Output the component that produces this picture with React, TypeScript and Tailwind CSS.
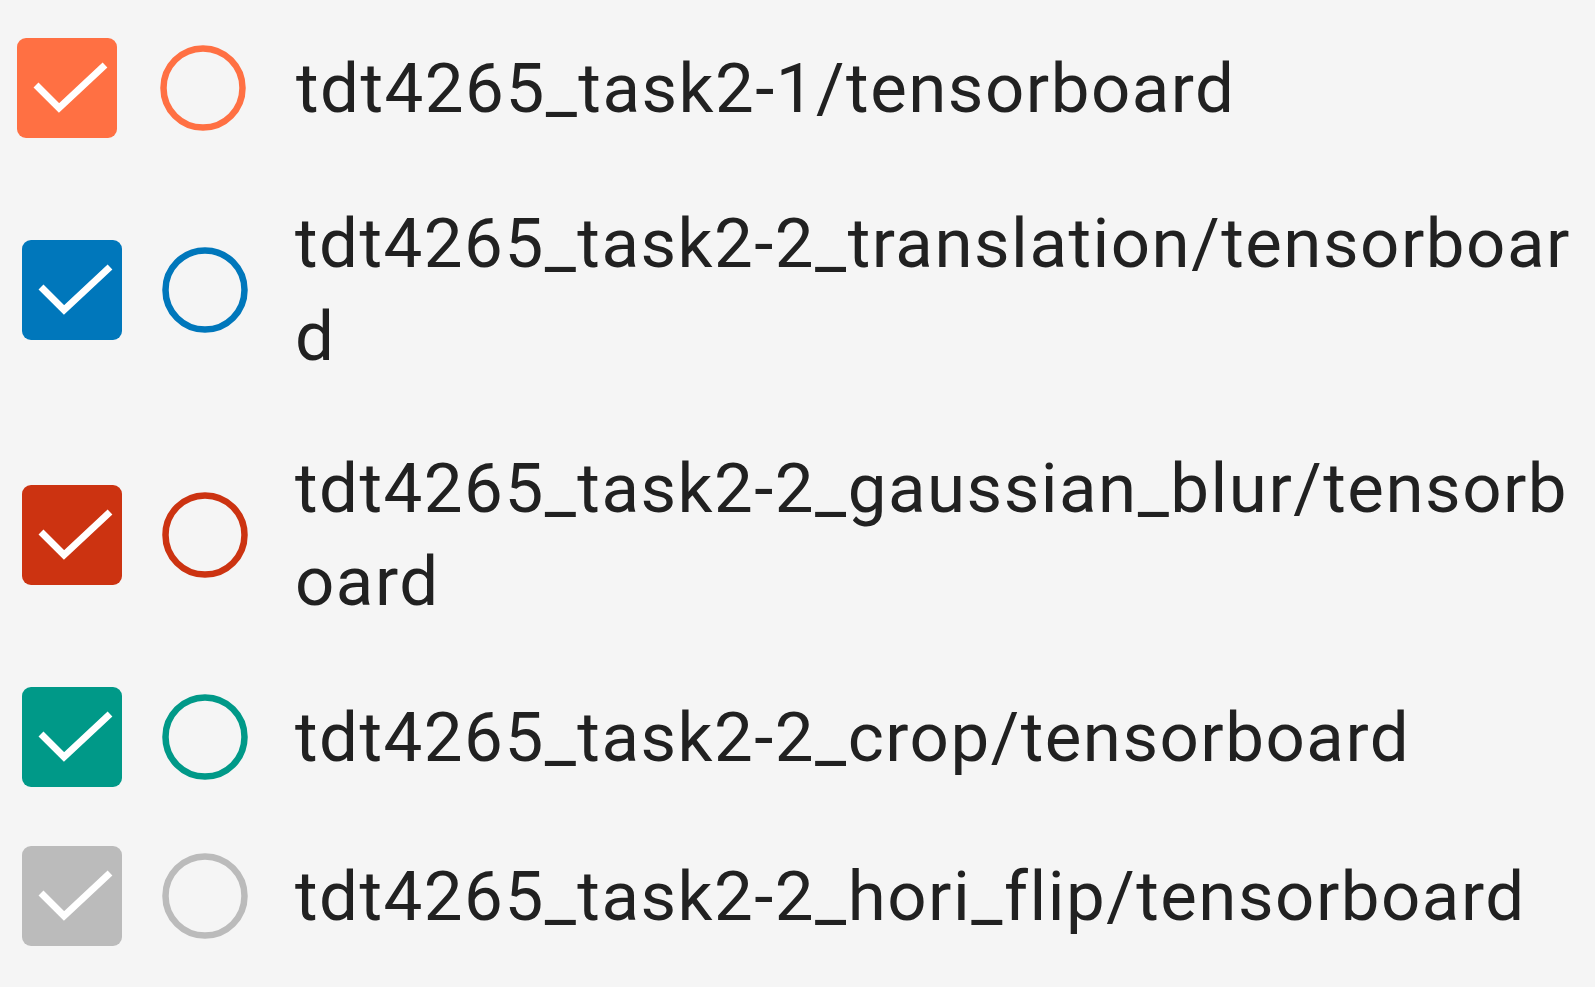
import React from "react"

type Run = {
  name: string
  color: string
  shift?: boolean
}

const runs: Run[] = [
  { name: "tdt4265_task2-1/tensorboard", color: "#ff7043", shift: true },
  { name: "tdt4265_task2-2_translation/tensorboard", color: "#0077bb" },
  { name: "tdt4265_task2-2_gaussian_blur/tensorboard", color: "#cc3311" },
  { name: "tdt4265_task2-2_crop/tensorboard", color: "#009988" },
  { name: "tdt4265_task2-2_hori_flip/tensorboard", color: "#bbbbbb" },
]

function CheckBox({ color }: { color: string }) {
  return (
    <div
      className="w-[100px] h-[100px] rounded-[9px] shrink-0 flex items-center justify-center"
      style={{ backgroundColor: color }}
    >
      <svg width="100" height="100" viewBox="0 0 100 100" fill="none">
        <path
          d="M19 47 L42 70 L88 27"
          stroke="white"
          strokeWidth="7"
          strokeLinecap="butt"
          strokeLinejoin="miter"
        />
      </svg>
    </div>
  )
}

function Radio({ color }: { color: string }) {
  return (
    <svg width="86" height="86" viewBox="0 0 86 86" className="shrink-0">
      <circle cx="43" cy="43" r="39.5" fill="none" stroke={color} strokeWidth="6.5" />
    </svg>
  )
}

export default function App() {
  return (
    <div
      className="w-[1595px] h-[987px] bg-[#f5f5f5] overflow-hidden pt-[8.5px]"
      style={{ fontFamily: "Roboto, 'Liberation Sans', sans-serif" }}
    >
      {runs.map((run) => (
        <div key={run.name} className="flex items-center py-[29.5px] pr-[14px]">
          <div className={run.shift ? "pl-[17px] pr-[43px]" : "pl-[22px] pr-[40px]"}>
            <CheckBox color={run.color} />
          </div>
          <div className={run.shift ? "pr-[50px]" : "pr-[47px]"}>
            <Radio color={run.color} />
          </div>
          <div className="flex-1 min-w-0 text-[69px] leading-[93px] tracking-[1.5px] text-[#212121] break-all">
            {run.name}
          </div>
        </div>
      ))}
    </div>
  )
}
